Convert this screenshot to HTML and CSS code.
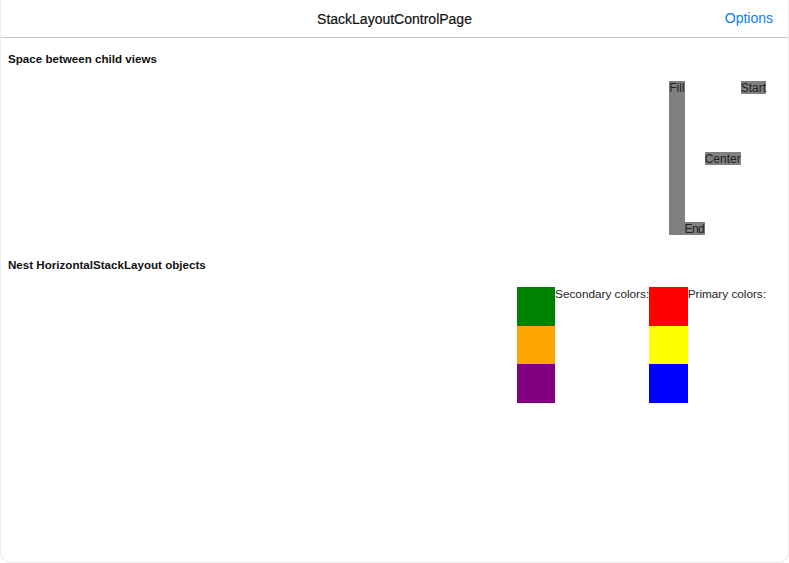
FILE: index.html
```html
<!DOCTYPE html>
<html>
<head>
<meta charset="utf-8">
<link rel="stylesheet" href="styles.css">
</head>
<body>
<div class="window">
  <header class="navbar">
    <div class="title">StackLayoutControlPage</div>
    <div class="options">Options</div>
  </header>
  <main class="content">
    <h2 class="heading h-first">Space between child views</h2>
    <div class="row-wrap">
      <div class="hstack">
        <div class="tag fill">Fill</div>
        <div class="tag end">End</div>
        <div class="tag center">Center</div>
        <div class="tag start">Start</div>
      </div>
    </div>
    <h2 class="heading h-second">Nest HorizontalStackLayout objects</h2>
    <div class="row-wrap">
      <div class="nest">
        <div class="swatches">
          <div class="sw green"></div>
          <div class="sw orange"></div>
          <div class="sw purple"></div>
        </div>
        <div class="caption">Secondary colors:</div>
        <div class="swatches">
          <div class="sw red"></div>
          <div class="sw yellow"></div>
          <div class="sw blue"></div>
        </div>
        <div class="caption">Primary colors:</div>
      </div>
    </div>
  </main>
</div>
</body>
</html>
```

FILE: styles.css
```css
html, body {
  margin: 0;
  padding: 0;
  background: #ffffff;
}
body {
  font-family: "Liberation Sans", Arial, sans-serif;
}
.window {
  width: 789px;
  height: 563px;
  box-sizing: border-box;
  background: #ffffff;
  border-radius: 0 0 11px 11px;
  border: 1px solid rgba(0,0,0,0.07);
  border-top: none;
  overflow: hidden;
  display: flex;
  flex-direction: column;
}
.navbar {
  height: 37px;
  flex: none;
  border-bottom: 1px solid #c6c6c6;
  display: flex;
  align-items: center;
  justify-content: center;
  position: relative;
}
.title {
  font-size: 14px;
  color: #111;
  -webkit-text-stroke: 0.2px #111;
}
.options {
  position: absolute;
  right: 15px;
  top: 10px;
  font-size: 14px;
  color: #0a7aff;
}
.content {
  display: flex;
  flex-direction: column;
  padding: 0 22px 0 7px;
}
.heading {
  margin: 0;
  font-size: 11.6px;
  line-height: 14px;
  font-weight: bold;
  color: #111;
}
.h-first { margin-top: 14px; }
.h-second { margin-top: 23px; }
.row-wrap {
  display: flex;
  justify-content: flex-end;
  margin-top: 15px;
}
.hstack {
  display: flex;
  height: 154px;
  align-items: flex-start;
}
.tag {
  background: #808080;
  color: #222;
  font-size: 12px;
  line-height: 14px;
  height: 13px;
  overflow: visible;
}
.fill { align-self: stretch; height: auto; }
.end { align-self: flex-end; letter-spacing: -0.6px; padding-right: 0.5px; }
.center { align-self: center; }
.start { align-self: flex-start; }
.nest {
  display: flex;
  align-items: flex-start;
}
.swatches {
  display: flex;
  flex-direction: column;
}
.sw {
  width: 38.5px;
  height: 38.5px;
}
.green { background: #008000; }
.orange { background: #ffa500; }
.purple { background: #800080; }
.red { background: #ff0000; }
.yellow { background: #ffff00; }
.blue { background: #0000ff; }
.caption {
  font-size: 11.75px;
  line-height: 14px;
  color: #222;
}
```
